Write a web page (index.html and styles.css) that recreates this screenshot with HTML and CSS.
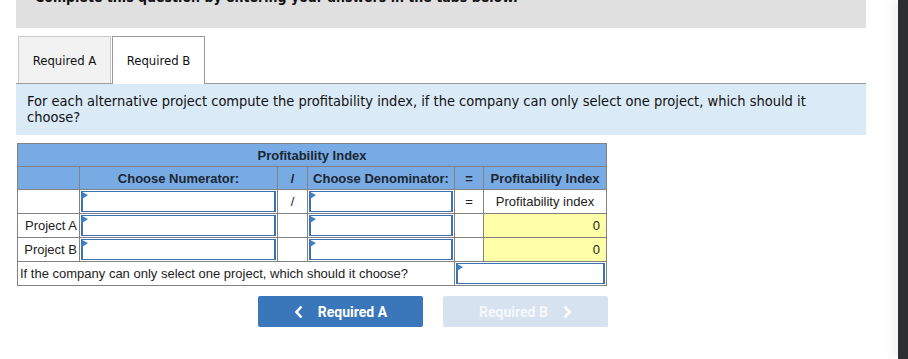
FILE: index.html
```html
<!DOCTYPE html>
<html lang="en">
<head>
    <meta charset="UTF-8">
    <meta name="viewport" content="width=device-width, initial-scale=1.0">
    <title>Profitability Index</title>
    <link rel="stylesheet" href="styles.css">
</head>
<body>
    <div class="main">
        <div class="banner">
            <p>Complete this question by entering your answers in the tabs below.</p>
        </div>

        <div class="tabs">
            <div class="tab">Required A</div>
            <div class="tab active">Required B</div>
        </div>

        <div class="prompt">
            For each alternative project compute the profitability index, if the company can only select one project, which should it choose?
        </div>

        <table class="pi-table">
            <colgroup>
                <col class="c-label">
                <col class="c-num">
                <col class="c-op">
                <col class="c-den">
                <col class="c-eq">
                <col class="c-res">
            </colgroup>
            <tr class="head">
                <th colspan="6">Profitability Index</th>
            </tr>
            <tr class="head">
                <th></th>
                <th>Choose Numerator:</th>
                <th>/</th>
                <th>Choose Denominator:</th>
                <th>=</th>
                <th>Profitability Index</th>
            </tr>
            <tr>
                <td></td>
                <td class="cell-input"><div class="field"><input type="text"></div></td>
                <td class="op">/</td>
                <td class="cell-input"><div class="field"><input type="text"></div></td>
                <td class="op">=</td>
                <td class="center">Profitability index</td>
            </tr>
            <tr>
                <td class="label">Project A</td>
                <td class="cell-input"><div class="field"><input type="text"></div></td>
                <td></td>
                <td class="cell-input"><div class="field"><input type="text"></div></td>
                <td></td>
                <td class="result">0</td>
            </tr>
            <tr>
                <td class="label">Project B</td>
                <td class="cell-input"><div class="field"><input type="text"></div></td>
                <td></td>
                <td class="cell-input"><div class="field"><input type="text"></div></td>
                <td></td>
                <td class="result">0</td>
            </tr>
            <tr>
                <td colspan="4" class="question">If the company can only select one project, which should it choose?</td>
                <td colspan="2" class="cell-input"><div class="field"><input type="text"></div></td>
            </tr>
        </table>

        <div class="nav-buttons">
            <button class="btn">
                <svg width="10" height="14" viewBox="0 0 10 14"><path d="M7.5 1.5 L2.5 7 L7.5 12.5" fill="none" stroke="#fff" stroke-width="2.6"/></svg>
                <span>Required A</span>
            </button>
            <button class="btn disabled">
                <span>Required B</span>
                <svg width="10" height="14" viewBox="0 0 10 14"><path d="M2.5 1.5 L7.5 7 L2.5 12.5" fill="none" stroke="#fff" stroke-width="2.6"/></svg>
            </button>
        </div>
    </div>
    <div class="edge"></div>
</body>
</html>
```

FILE: styles.css
```css
html {
    overflow: hidden;
    background: #fff;
}

body {
    margin: 0;
    padding: 0;
    height: 359px;
    font-family: "DejaVu Sans Condensed", "DejaVu Sans", sans-serif;
}

.main {
    padding-left: 16px;
}

/* dark window edge on the right, drawn over the page */
.edge {
    position: fixed;
    top: 0;
    right: 0;
    bottom: 0;
    width: 10px;
    background-color: #2d2e2f;
    box-shadow: -6px 0 10px rgba(0, 0, 0, 0.06);
}

.banner {
    width: 850px;
    height: 28px;
    background-color: #e0e0e0;
    overflow: hidden;
}

.banner p {
    margin: -11px 0 0 19px;
    font-size: 14px;
    font-weight: bold;
    color: #111;
}

.tabs {
    display: flex;
    gap: 1px;
    width: 848px;
    margin-top: 8px;
    padding-left: 2px;
    border-bottom: 1px solid #9a9a9a;
}

.tab {
    width: 91px;
    height: 46px;
    box-sizing: content-box;
    border: 1px solid #c8c8c8;
    border-bottom: none;
    background-color: #f2f2f2;
    font-size: 13px;
    color: #111;
    display: flex;
    align-items: center;
    justify-content: center;
}

.tab.active {
    background-color: #ffffff;
    border-color: #9a9a9a;
    margin-bottom: -1px;
    height: 47px;
}

.prompt {
    width: 800px;
    padding: 9px 39px 10px 11px;
    background-color: #daeaf7;
    font-size: 14.5px;
    line-height: 16px;
    color: #111;
}

.pi-table {
    margin: 8px 0 0 1px;
    border-collapse: collapse;
    width: 589px;
    table-layout: fixed;
    font-family: "Liberation Sans", Arial, sans-serif;
    font-size: 13px;
    color: #222;
    background-color: #fff;
}

.c-label { width: 62px; }
.c-num { width: 198px; }
.c-op { width: 30px; }
.c-den { width: 147px; }
.c-eq { width: 29px; }
.c-res { width: 123px; }

.pi-table th,
.pi-table td {
    border: 1px solid #828282;
    height: 22px;
    padding: 0 3px;
}

.pi-table th {
    background-color: #78abe3;
    font-weight: bold;
    color: #1b2633;
    text-align: center;
}

.pi-table td.op,
.pi-table td.center {
    text-align: center;
}

.pi-table td.label {
    text-align: right;
    padding-right: 2px;
}

.pi-table td.result {
    background-color: #ffffa8;
    text-align: right;
    padding-right: 6px;
}

.pi-table td.question {
    padding-left: 2px;
}

.pi-table td.cell-input {
    padding: 1px;
    height: 21px;
}

.field {
    position: relative;
    height: 21px;
}

.field::before {
    content: "";
    position: absolute;
    left: 1px;
    top: 1px;
    border-left: 6px solid #3f7fc7;
    border-top: 3px solid transparent;
    border-bottom: 4px solid transparent;
}

.field input {
    display: block;
    width: 100%;
    height: 21px;
    box-sizing: border-box;
    border: 2px solid #3c72b3;
    border-top-width: 1px;
    border-bottom-width: 1px;
    margin: 0;
    padding: 0 4px;
    outline: none;
    background: #fff;
}

.nav-buttons {
    display: flex;
    gap: 20px;
    margin-top: 10px;
    padding-left: 242px;
}

.btn {
    width: 165px;
    height: 31px;
    border: none;
    border-radius: 2px;
    background-color: #3a77ba;
    color: #fff;
    font-family: Roboto, "Liberation Sans", sans-serif;
    font-size: 14px;
    font-weight: bold;
    display: flex;
    align-items: center;
    justify-content: center;
    gap: 14px;
    cursor: pointer;
}

.btn.disabled {
    background-color: #d7e2f0;
    color: #f6f8fb;
}
```
